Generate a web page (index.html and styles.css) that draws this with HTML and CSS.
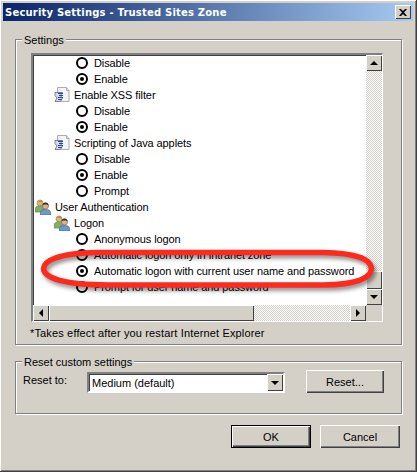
FILE: index.html
```html
<!DOCTYPE html>
<html lang="en">
<head>
  <meta charset="UTF-8">
  <title>Security Settings - Trusted Sites Zone</title>
  <link rel="stylesheet" href="styles.css">
</head>
<body>

<svg class="defs" width="0" height="0">
  <symbol id="script-icon" viewBox="0 0 16 16">
    <path d="M3.5 .5h9l2.500 3v11h-11.500z" fill="#f4f4f4" stroke="#a8acb4"/>
    <path d="M12.500 .5v3h2.500" fill="#dfe2e8" stroke="#a8acb4"/>
    <path d="M1 5.500h7.500l-2 3 2 2.500-2 3.500h-5.500l2-3.500-2-2.500z" fill="#d8dce2" stroke="#7d838c"/>
    <path d="M4 6.500h5M5 8.500h4M4 10.500h5M4 12.500h4" stroke="#2a3ec0" fill="none"/>
  </symbol>
  <symbol id="users-icon" viewBox="0 0 16 16">
    <circle cx="5" cy="4" r="3" fill="#d8b77a" stroke="#9a8556" stroke-width=".7"/>
    <path d="M5 1.500a3 3 0 0 1 3 1.500h-5z" fill="#a78a4e"/>
    <path d="M0 13v-3c0-2 2-3 5-3s4 1 4 3v3z" fill="#82ad64" stroke="#5e8a48" stroke-width=".7"/>
    <circle cx="10.500" cy="7" r="3" fill="#dcb489" stroke="#80684a" stroke-width=".7"/>
    <path d="M7.500 6.500a3 3 0 0 1 6 0l-1.500-1h-3z" fill="#3a2f28"/>
    <path d="M5.500 16v-2.500c0-2 2-3 5-3s5 1 5 3v2.500z" fill="#6c9ac8" stroke="#44688f" stroke-width=".7"/>
  </symbol>
</svg>

<div class="window">
  <div class="titlebar">
    <span class="title">Security Settings - Trusted Sites Zone</span>
    <span class="close-btn">
      <svg width="8" height="7" viewBox="0 0 8 7"><path d="M0 0h2l2 2 2-2h2l-3 3.500 3 3.500h-2l-2-2-2 2h-2l3-3.500z" fill="#000"/></svg>
    </span>
  </div>

  <div class="group settings-group">
    <div class="group-title">Settings</div>
    <div class="list-box">
      <div class="list-rows">
        <div class="row option"><span class="radio"></span>Disable</div>
        <div class="row option"><span class="radio on"></span>Enable</div>
        <div class="row level-1"><svg class="icon"><use href="#script-icon"/></svg>Enable XSS filter</div>
        <div class="row option"><span class="radio"></span>Disable</div>
        <div class="row option"><span class="radio on"></span>Enable</div>
        <div class="row level-1"><svg class="icon"><use href="#script-icon"/></svg>Scripting of Java applets</div>
        <div class="row option"><span class="radio"></span>Disable</div>
        <div class="row option"><span class="radio on"></span>Enable</div>
        <div class="row option"><span class="radio"></span>Prompt</div>
        <div class="row level-0"><svg class="icon"><use href="#users-icon"/></svg>User Authentication</div>
        <div class="row level-1"><svg class="icon"><use href="#users-icon"/></svg>Logon</div>
        <div class="row option"><span class="radio"></span>Anonymous logon</div>
        <div class="row option"><span class="radio"></span>Automatic logon only in Intranet zone</div>
        <div class="row option"><span class="radio on"></span>Automatic logon with current user name and password</div>
        <div class="row option"><span class="radio"></span>Prompt for user name and password</div>
      </div>
      <div class="vscroll">
        <span class="sb-btn"><span class="arrow up"></span></span>
        <span class="sb-track"></span>
        <span class="sb-btn thumb-v"></span>
        <span class="sb-btn"><span class="arrow down"></span></span>
      </div>
      <div class="hscroll">
        <span class="sb-btn"><span class="arrow left"></span></span>
        <span class="sb-btn thumb-h"></span>
        <span class="sb-track"></span>
        <span class="sb-btn"><span class="arrow right"></span></span>
      </div>
      <div class="corner"></div>
    </div>
    <div class="note">*Takes effect after you restart Internet Explorer</div>
  </div>

  <div class="group reset-group">
    <div class="group-title">Reset custom settings</div>
    <div class="reset-row">
      <span class="reset-label">Reset to:</span>
      <div class="combo">
        <span class="combo-value">Medium (default)</span>
        <span class="sb-btn combo-btn"><span class="arrow down"></span></span>
      </div>
      <button class="btn reset-btn">Reset...</button>
    </div>
  </div>

  <div class="actions">
    <button class="btn default">OK</button>
    <button class="btn">Cancel</button>
  </div>

  <!-- red marker drawn over the screenshot -->
  <svg class="marker" width="350" height="48" viewBox="0 0 350 48">
    <path d="M60 5.500C20 6 6 14 5.500 21.500 6 31 24 37.500 70 38H285C322 37.500 333 30 333.500 21.500 333 12 318 6 285 5.500z" fill="none" stroke="#ff2a1c" stroke-width="5.500"/>
  </svg>
</div>

</body>
</html>
```

FILE: styles.css
```css
body {
  margin: 0;
  background: #d4d0c8;
  font-family: "Liberation Sans", Arial, sans-serif;
  font-size: 11px;
  color: #000;
  overflow: hidden;
}

.defs {
  position: absolute;
}

.window {
  position: relative;
  box-sizing: border-box;
  width: 417px;
  height: 472px;
  padding: 3px 3px 0;
  background: #d4d0c8;
  border-right: 1px solid #404040;
  border-bottom: 1px solid #404040;
  box-shadow: inset 1px 1px 0 #fff, inset -1px -1px 0 #808080;
}

.titlebar {
  display: flex;
  align-items: center;
  justify-content: space-between;
  height: 18px;
  padding: 0 2px;
  background: linear-gradient(to right, #0a246a, #a6caf0);
}

.title {
  color: #fff;
  font-family: "DejaVu Sans", Verdana, sans-serif;
  font-weight: bold;
  font-size: 10px;
  letter-spacing: .2px;
  white-space: nowrap;
}

.close-btn {
  display: flex;
  align-items: center;
  justify-content: center;
  width: 16px;
  height: 14px;
  background: #d4d0c8;
  box-shadow: inset 1px 1px 0 #fff, inset -1px -1px 0 #404040;
}

/* etched frames */
.group {
  box-sizing: border-box;
  margin: 0 12px 0 12px;
  width: 387px;
  border: 1px solid #808080;
  box-shadow: 1px 1px 0 #fff, inset 1px 1px 0 #fff;
}

.group-title {
  width: max-content;
  margin: -6px 0 0 6px;
  padding: 0 2px;
  height: 13px;
  line-height: 13px;
  background: #d4d0c8;
}

.settings-group {
  margin-top: 18px;
  height: 306px;
}

.reset-group {
  margin-top: 16px;
  height: 53px;
}

.list-box {
  display: grid;
  grid-template-columns: 333px 16px;
  grid-template-rows: 250px 16px;
  width: 349px;
  margin: 6px 0 0 15px;
  border: solid;
  border-width: 2px 1px 1px 2px;
  border-color: #808080 #fff #fff #808080;
  box-shadow: inset 1px 1px 0 #404040;
  background: #fff;
}

.list-rows {
  overflow: hidden;
  letter-spacing: -.1px;
}

.row {
  display: flex;
  align-items: center;
  height: 16px;
  white-space: nowrap;
}

.level-0 { padding-left: 2px; }
.level-1 { padding-left: 21px; }
.option { padding-left: 43px; }

.icon {
  width: 16px;
  height: 16px;
  margin-right: 4px;
  flex: none;
}

.radio {
  box-sizing: border-box;
  position: relative;
  flex: none;
  width: 12px;
  height: 12px;
  margin-right: 6px;
  border: 2px solid #000;
  border-radius: 50%;
  background: #fff;
}

.radio.on::after {
  content: "";
  position: absolute;
  left: 2px;
  top: 2px;
  width: 4px;
  height: 4px;
  border-radius: 50%;
  background: #000;
}

/* scrollbars */
.vscroll {
  display: flex;
  flex-direction: column;
}

.hscroll {
  display: flex;
}

.corner {
  background: #d4d0c8;
}

.sb-btn {
  box-sizing: border-box;
  display: flex;
  align-items: center;
  justify-content: center;
  flex: none;
  width: 16px;
  height: 16px;
  background: #d4d0c8;
  box-shadow: inset 1px 1px 0 #fff, inset -1px -1px 0 #404040;
}

.sb-track {
  flex: 1;
  background: repeating-conic-gradient(#d4d0c8 0 25%, #fff 0 50%) 0 0 / 2px 2px;
}

.thumb-v {
  height: 18px;
}

.thumb-h {
  width: 205px;
}

.arrow {
  width: 0;
  height: 0;
  border: 4px solid transparent;
}

.arrow.up { border-top: 0; border-bottom-color: #000; }
.arrow.down { border-bottom: 0; border-top-color: #000; }
.arrow.left { border-left: 0; border-right-color: #000; }
.arrow.right { border-right: 0; border-left-color: #000; }

.note {
  margin: 5px 0 0 14px;
  line-height: 13px;
  letter-spacing: .15px;
}

.reset-row {
  display: flex;
  align-items: flex-start;
  margin: 1px 0 0 7px;
}

.reset-label {
  width: 64px;
  margin-top: 4px;
  line-height: 13px;
}

.combo {
  box-sizing: border-box;
  display: flex;
  align-items: center;
  justify-content: space-between;
  width: 198px;
  height: 21px;
  margin-top: 2px;
  padding-left: 3px;
  background: #fff;
  border: 2px solid;
  border-color: #808080 #fff #fff #808080;
  box-shadow: inset 1px 1px 0 #404040;
}

.combo-btn {
  height: 17px;
}

.btn {
  box-sizing: border-box;
  width: 80px;
  height: 23px;
  padding: 0;
  font: inherit;
  color: #000;
  background: #d4d0c8;
  border: 0;
  border-radius: 0;
  box-shadow: inset 1px 1px 0 #fff, inset -1px -1px 0 #404040, inset -2px -2px 0 #808080;
}

.reset-btn {
  width: 78px;
  margin-left: 21px;
}

.btn.default {
  border: 1px solid #000;
}

.actions {
  display: flex;
  justify-content: flex-end;
  gap: 9px;
  margin: 11px 13px 0 0;
}

.marker {
  position: absolute;
  left: 38px;
  top: 247px;
  filter: drop-shadow(2px 3px 2px rgba(0, 0, 0, .45));
}
```
